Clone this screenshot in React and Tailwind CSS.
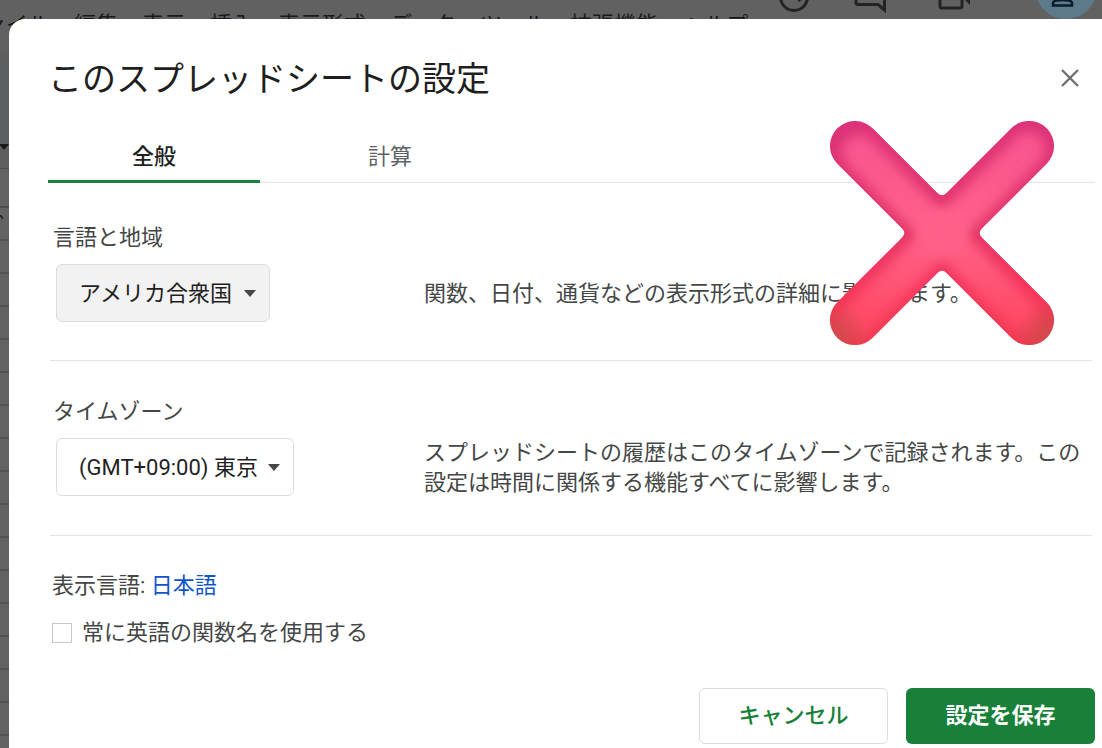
import React, { useState } from "react";

const menus = ["ファイル", "編集", "表示", "挿入", "表示形式", "データ", "ツール", "拡張機能", "ヘルプ"];

function Backdrop() {
  return (
    <div aria-hidden="true" className="absolute inset-0 overflow-hidden bg-[#636363]">
      <div className="flex h-[52px] items-start justify-between bg-[#616161]">
        <div className="-ml-[38px] flex gap-6 pt-[9px] text-[22px] leading-8 whitespace-nowrap text-[#1a1a1a]">
          {menus.map((m) => (
            <span key={m}>{m}</span>
          ))}
        </div>
        <svg className="h-[19px] w-[337px] shrink-0" viewBox="0 0 337 19" fill="none">
          <circle cx="29" cy="-3" r="13.5" stroke="#232323" strokeWidth="3" />
          <path d="M29 -10V-5L35.5 1" stroke="#232323" strokeWidth="3" />
          <path d="M91 -20V2.500Q91 4.500 93 4.500H113L119.500 10V-20" stroke="#232323" strokeWidth="3" />
          <path d="M175 -16V6Q175 8 177 8H195Q197 8 197 6V-16" stroke="#232323" strokeWidth="3" />
          <path d="M198 -2L205 5V-8H198Z" fill="#232323" />
          <circle cx="301" cy="-12" r="31" fill="#5c7a8a" />
          <path d="M288 5.500V3Q288 0 297.500 0Q307 0 307 3V5.500Z" stroke="#0a1a2a" strokeWidth="2.500" />
        </svg>
      </div>
      <div className="h-[117px] border-b border-[#4c4c4c] bg-[#5d5e60] pt-[92px]">
        <svg className="h-[6px] w-[9px]" viewBox="0 0 9 6">
          <path d="M-1 0H9L4 6Z" fill="#1a1a1a" />
        </svg>
      </div>
      <div className="h-[39px] border-b-2 border-[#4c4c4c]" />
      <div className="h-[33px] border-b-2 border-[#525252] pt-[6px]">
        <svg className="h-[6px] w-[4px]" viewBox="0 0 4 6" fill="none">
          <path d="M-1 2Q2 1 2.500 5" stroke="#1a1a1a" strokeWidth="1.500" />
        </svg>
      </div>
      {Array.from({ length: 30 }, (_, i) => (
        <div key={i} className="h-[33px] border-b-2 border-[#525252]" />
      ))}
    </div>
  );
}

function Picker({ id, label, options, className }) {
  return (
    <div>
      <label htmlFor={id} className="block pl-[3px] leading-8 text-[#444746]">
        {label}
      </label>
      <div className="mt-[10px] ml-[6px] inline-block">
        <div className="relative">
          <select
            id={id}
            className={
              "block h-[58px] appearance-none rounded-md border border-[#dadce0] pr-[35px] pl-[22px] text-[#1f1f1f] " +
              className
            }
          >
            {options.map((o) => (
              <option key={o}>{o}</option>
            ))}
          </select>
          <svg className="pointer-events-none absolute top-[26px] right-[14px] h-[7px] w-3" viewBox="0 0 12 7">
            <path d="M0 0H12L6 7Z" fill="#444746" />
          </svg>
        </div>
      </div>
    </div>
  );
}

function CrossMark() {
  return (
    <svg
      aria-hidden="true"
      className="pointer-events-none absolute top-[102px] right-12 h-[224px] w-[224px]"
      viewBox="0 0 224 224"
    >
      <defs>
        <linearGradient id="base" x1="0" y1="0" x2="0" y2="1">
          <stop offset="0" stopColor="#dc3279" />
          <stop offset="0.45" stopColor="#e23569" />
          <stop offset="0.75" stopColor="#f6345a" />
          <stop offset="1" stopColor="#f03a4e" />
        </linearGradient>
        <linearGradient id="shine" x1="0" y1="0" x2="0" y2="1">
          <stop offset="0" stopColor="#f9558e" />
          <stop offset="0.5" stopColor="#ff6189" />
          <stop offset="1" stopColor="#ff4a66" />
        </linearGradient>
        <radialGradient id="tipLeft" gradientUnits="userSpaceOnUse" cx="4" cy="216" r="36">
          <stop offset="0" stopColor="#d04c4c" />
          <stop offset="1" stopColor="#d04c4c" stopOpacity="0" />
        </radialGradient>
        <radialGradient id="tipRight" gradientUnits="userSpaceOnUse" cx="220" cy="216" r="36">
          <stop offset="0" stopColor="#d04c4c" />
          <stop offset="1" stopColor="#d04c4c" stopOpacity="0" />
        </radialGradient>
        <filter id="soft" filterUnits="userSpaceOnUse" x="-30" y="-30" width="284" height="284">
          <feGaussianBlur stdDeviation="6" />
        </filter>
        <path
          id="cross"
          d="M42.700 7.300L107.500 72.100Q112 76.500 116.500 72.100L181.300 7.300A25 25 0 0 1 216.700 42.700L151.900 107.500Q147.500 112 151.900 116.500L216.700 181.300A25 25 0 0 1 181.300 216.700L116.500 151.900Q112 147.500 107.500 151.900L42.700 216.700A25 25 0 0 1 7.300 181.300L72.100 116.500Q76.500 112 72.100 107.500L7.300 42.700A25 25 0 0 1 42.700 7.300Z"
        />
        <clipPath id="crossClip">
          <use href="#cross" />
        </clipPath>
      </defs>
      <g clipPath="url(#crossClip)">
        <rect width="224" height="224" fill="url(#base)" />
        <path
          d="M29 31L192 194M198 28L29 197"
          stroke="url(#shine)"
          strokeWidth="34"
          strokeLinecap="round"
          filter="url(#soft)"
        />
        <circle cx="112" cy="112" r="22" fill="#ff6189" filter="url(#soft)" />
        <rect width="224" height="224" fill="url(#tipLeft)" />
        <rect width="224" height="224" fill="url(#tipRight)" />
      </g>
    </svg>
  );
}

export default function App() {
  const [tab, setTab] = useState("general");
  const active = "border-[#188038] font-medium text-[#1f1f1f]";
  const idle = "border-transparent text-[#5f6368]";
  return (
    <div
      lang="ja"
      className="relative flex min-h-screen flex-col overflow-hidden pt-[19px] pl-[9px] font-[Roboto,'Noto_Sans_CJK_JP',sans-serif] text-[22px]"
    >
      <Backdrop />
      <div
        role="dialog"
        aria-modal="true"
        aria-labelledby="title"
        className="relative flex grow flex-col rounded-tl-2xl bg-white pr-[7px] pb-1 pl-[39px]"
      >
        <header className="flex items-center justify-between pt-8 pr-[14px]">
          <h1 id="title" className="pt-0.5 text-[34px] leading-[52px] text-[#1f1f1f]">
            このスプレッドシートの設定
          </h1>
          <button type="button" aria-label="閉じる" className="p-px">
            <svg className="h-[20px] w-[20px]" viewBox="0 0 20 20" fill="none" stroke="#6b6e70" strokeWidth="2.300">
              <path d="M2 2L18 18M18 2L2 18" />
            </svg>
          </button>
        </header>

        <div role="tablist" className="mt-[26px] flex gap-6 shadow-[inset_0_-1px_0_#e3e3e3]">
          <button
            type="button"
            role="tab"
            aria-selected={tab === "general"}
            onClick={() => setTab("general")}
            className={"h-[52px] w-[212px] border-b-3 pt-0.5 " + (tab === "general" ? active : idle)}
          >
            全般
          </button>
          <button
            type="button"
            role="tab"
            aria-selected={tab === "calc"}
            onClick={() => setTab("calc")}
            className={"h-[52px] w-[212px] border-b-3 pt-0.5 " + (tab === "calc" ? active : idle)}
          >
            計算
          </button>
        </div>

        <div className="mr-[3px] ml-0.5">
          <section className="grid grid-cols-[374px_1fr] border-b border-[#e3e3e3] pt-[39px] pb-[38px]">
            <Picker id="locale" label="言語と地域" options={["アメリカ合衆国"]} className="bg-[#f2f2f2]" />
            <p className="self-end pb-[13px] leading-[30px] text-[#444746]">
              関数、日付、通貨などの表示形式の詳細に影響します。
            </p>
          </section>
          <section className="grid grid-cols-[374px_1fr] border-b border-[#e3e3e3] pt-[35px] pb-[39px]">
            <Picker id="tz" label="タイムゾーン" options={["(GMT+09:00) 東京"]} className="bg-white" />
            <p className="-mb-0.5 self-end leading-[30px] text-[#444746]">
              スプレッドシートの履歴はこのタイムゾーンで記録されます。この設定は時間に関係する機能すべてに影響します。
            </p>
          </section>
          <section className="pt-[34px] pl-0.5 leading-8 text-[#444746]">
            <p>
              表示言語:{" "}
              <a href="#language" className="text-[#1155cc]">
                日本語
              </a>
            </p>
            <label className="mt-[15px] flex items-center gap-[10px]">
              <input type="checkbox" className="h-5 w-5 appearance-none border border-[#c4c7c5] bg-white" />
              常に英語の関数名を使用する
            </label>
          </section>
        </div>

        <footer className="mt-auto flex justify-end gap-[18px] font-medium">
          <button type="button" className="h-14 w-[189px] rounded-md border border-[#dadce0] pb-0.5 text-[#188038]">
            キャンセル
          </button>
          <button type="button" className="h-14 w-[189px] rounded-md bg-[#188038] pb-0.5 font-bold text-white">
            設定を保存
          </button>
        </footer>

        <CrossMark />
      </div>
    </div>
  );
}
